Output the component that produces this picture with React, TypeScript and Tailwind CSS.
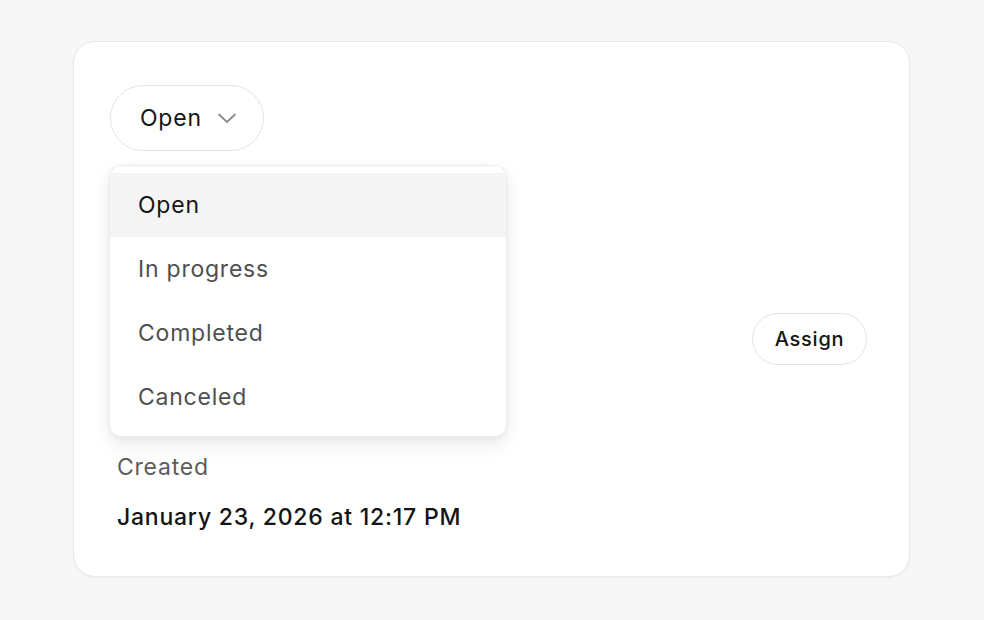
import React, { useState } from "react";

const statuses = ["Open", "In progress", "Completed", "Canceled"];

const Chevron: React.FC = () => (
  <svg width="24" height="24" viewBox="0 0 24 24" fill="none" stroke="#8a8a8a" strokeWidth="1.8" strokeLinecap="round" strokeLinejoin="round">
    <path d="M4 8.5l8 7.5 8-7.5" />
  </svg>
);

const App: React.FC = () => {
  const [status, setStatus] = useState("Open");
  const [open, setOpen] = useState(true);

  return (
    <div className="w-full h-screen bg-[#f7f7f7] pl-[73px] pt-[41px] tracking-[0.048em]" style={{ fontFamily: "Inter, 'Noto Sans', sans-serif" }}>
      <div className="relative w-[837px] h-[536px] bg-white border border-[#e9e9e9] rounded-[22px] shadow-[0_1px_3px_rgba(0,0,0,0.04)] px-[36px] pt-[43px]">
        {/* Status trigger */}
        <button
          onClick={() => setOpen(!open)}
          className="h-[66px] w-[154px] flex items-center gap-[13px] pl-[29px] border border-[#e4e4e4] rounded-full bg-white text-[23px] text-[#151515]"
        >
          {status}
          <Chevron />
        </button>

        {/* Details */}
        <div className="pl-[7px]">
          <div className="flex items-center justify-end h-[52px] mt-[162px] pr-[6px]">
            <button className="h-[52px] w-[115px] rounded-full border border-[#e4e4e4] text-[20px] font-medium text-[#151515]">
              Assign
            </button>
          </div>
          <div className="mt-[88px] text-[23px] leading-[28px] text-[#5c5c5c]">Created</div>
          <div className="mt-[22px] text-[23px] leading-[28px] font-medium text-[#141414]">
            January 23, 2026 at 12:17 PM
          </div>
        </div>

        {/* Status menu */}
        {open && (
          <div className="absolute left-[35px] top-[123px] w-[398px] bg-white border border-[#ececec] rounded-[12px] shadow-[0_8px_20px_rgba(0,0,0,0.08),0_2px_5px_rgba(0,0,0,0.05)] py-[7px]">
            {statuses.map((s) => (
              <div
                key={s}
                onClick={() => {
                  setStatus(s);
                  setOpen(false);
                }}
                className={`h-[64px] flex items-center pl-[28px] text-[23px] cursor-pointer ${
                  s === status ? "bg-[#f5f5f5] text-[#151515]" : "text-[#4f4f4f]"
                }`}
              >
                {s}
              </div>
            ))}
          </div>
        )}
      </div>
    </div>
  );
};

export default App;
